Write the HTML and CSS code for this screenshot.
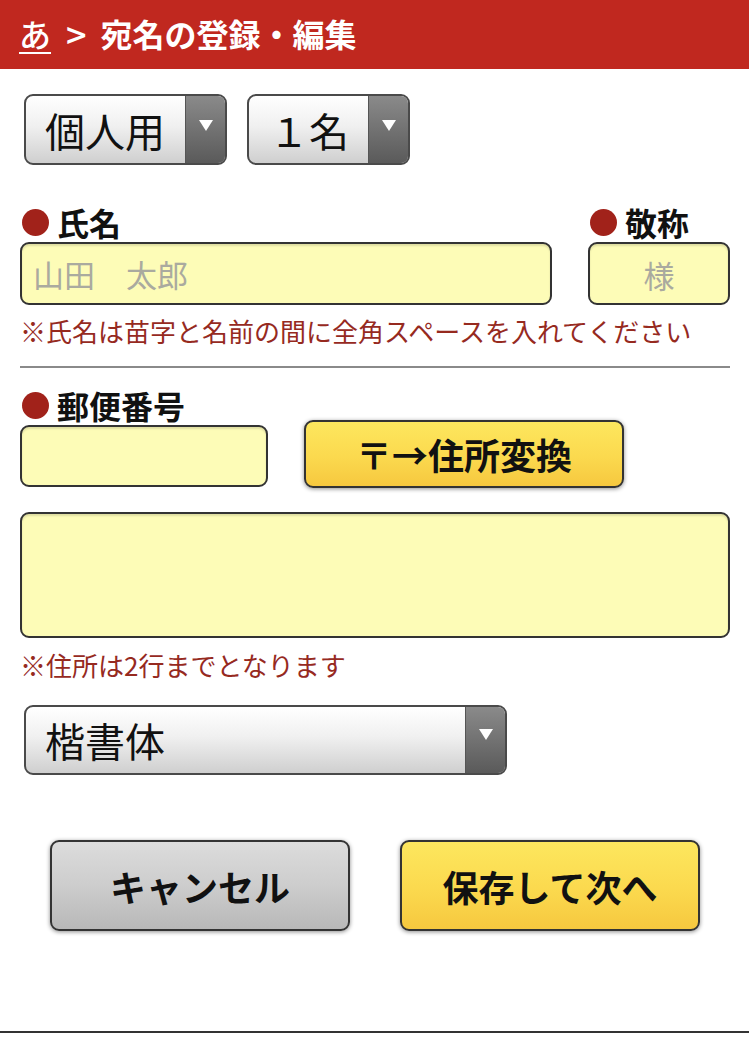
FILE: index.html
```html
<!DOCTYPE html>
<html lang="ja">
<head>
<meta charset="utf-8">
<title>宛名の登録・編集</title>
<link rel="stylesheet" href="styles.css">
</head>
<body>
<header class="topbar">
  <span class="crumb-link">あ</span><span class="crumb-sep">&gt;</span><span class="crumb-title">宛名の登録・編集</span>
</header>
<main class="content">
  <div class="select-row">
    <div class="select select-type"><span class="select-text">個人用</span><span class="select-arrow"></span></div>
    <div class="select select-count"><span class="select-text">１名</span><span class="select-arrow"></span></div>
  </div>

  <div class="name-grid">
    <div class="field">
      <div class="label"><span class="dot"></span>氏名</div>
      <div class="input input-name placeholder">山田　太郎</div>
    </div>
    <div class="field">
      <div class="label label-honor"><span class="dot"></span>敬称</div>
      <div class="input input-honor placeholder">様</div>
    </div>
  </div>
  <p class="note note-name">※氏名は苗字と名前の間に全角スペースを入れてください</p>
  <hr class="rule">

  <div class="label label-postal"><span class="dot"></span>郵便番号</div>
  <div class="postal-row">
    <div class="input input-postal"></div>
    <button class="btn btn-yellow btn-convert">〒→住所変換</button>
  </div>
  <div class="input input-address"></div>
  <p class="note note-address">※住所は2行までとなります</p>

  <div class="select select-font"><span class="select-text">楷書体</span><span class="select-arrow"></span></div>

  <div class="action-row">
    <button class="btn btn-gray btn-action">キャンセル</button>
    <button class="btn btn-yellow btn-action">保存して次へ</button>
  </div>
</main>
<div class="footer-line"></div>
</body>
</html>
```

FILE: styles.css
```css
* { box-sizing: border-box; }
html, body { margin: 0; padding: 0; background: #fff; }
body {
  font-family: "Noto Sans CJK JP", "Noto Sans", sans-serif;
  color: #111;
  width: 749px;
}

.topbar {
  height: 69px;
  background: #c0281f;
  color: #fff;
  display: flex;
  align-items: center;
  padding-left: 19px;
  padding-bottom: 4px;
  font-size: 32px;
  font-weight: 700;
  letter-spacing: 0;
}
.crumb-link {
  font-weight: 500;
  text-decoration: underline;
  text-decoration-thickness: 2px;
  text-underline-offset: 5px;
}
.crumb-sep { margin: 0 14px 0 15px; font-weight: 500; font-size: 36px; }

.content { padding: 0 19px 0 20px; }

/* selects */
.select-row { display: flex; gap: 20px; margin-top: 25px; padding-left: 4px; }
.select {
  height: 71px;
  border: 2px solid #4a4a4a;
  border-radius: 9px;
  background: linear-gradient(#ffffff 0%, #f0f0f0 45%, #cfcfcf 100%);
  display: flex;
  align-items: center;
  position: relative;
  overflow: hidden;
}
.select-text {
  flex: 1;
  font-size: 40px;
  font-weight: 400;
  color: #111;
  line-height: 1;
  padding-left: 19px;
}
.select-arrow {
  width: 40px;
  align-self: stretch;
  background: linear-gradient(#8a8a8a, #5a5a5a);
  border-left: 1px solid #555;
  position: relative;
}
.select-arrow::after {
  content: "";
  position: absolute;
  left: 50%;
  top: 24px;
  margin-left: -7px;
  border-left: 7px solid transparent;
  border-right: 7px solid transparent;
  border-top: 11px solid #fff;
}
.select-type { width: 203px; }
.select-count { width: 163px; }
.select-count .select-text { padding-left: 20px; }
.select-font { width: 483px; height: 70px; margin-left: 4px; margin-top: 25px; }
.select-font .select-arrow::after { top: 22px; }

/* labels */
.label {
  display: flex;
  align-items: center;
  font-size: 32px;
  font-weight: 700;
  height: 36px;
  line-height: 36px;
  color: #111;
}
.dot {
  width: 27px;
  height: 27px;
  border-radius: 50%;
  background: #a1221a;
  margin: 0 8px 0 2px;
  flex: none;
}

/* name row */
.name-grid {
  display: grid;
  grid-template-columns: 532px 142px;
  column-gap: 36px;
  margin-top: 39px;
}
.field .input { margin-top: 2px; }

.input {
  border: 2px solid #333;
  border-radius: 9px;
  background: #fdfcb7;
  box-shadow: inset 0 2px 2px rgba(0,0,0,0.12);
}
.placeholder {
  color: #aaaa9f;
  font-size: 31px;
  line-height: 1;
  display: flex;
  align-items: center;
}
.input-name { height: 63px; padding-left: 11px; }
.input-honor { height: 63px; justify-content: center; padding-left: 0; padding-top: 2px; }

.note {
  margin: 0;
  font-size: 26px;
  line-height: 30px;
  color: #962a1f;
}
.note-name { margin-top: 11px; }
.rule {
  margin: 20px 0 0;
  border: 0;
  height: 2px;
  background: #8a8a8a;
}

.label-postal { margin-top: 22px; height: 30px; line-height: 30px; }
.postal-row {
  display: flex;
  align-items: flex-end;
  gap: 36px;
  margin-top: 0;
}
.input-postal { width: 248px; height: 62px; margin-bottom: 1px; }

.btn {
  font-family: "Noto Sans CJK JP", "Noto Sans", sans-serif;
  font-weight: 700;
  color: #111;
  border: 2px solid #333;
  border-radius: 9px;
  box-shadow: 0 1px 4px rgba(0,0,0,0.45);
  padding: 0;
  line-height: 1;
}
.btn-yellow { background: linear-gradient(#fde75e 0%, #fbd94e 55%, #f6c83f 100%); }
.btn-gray { background: linear-gradient(#dcdcdc 0%, #cdcdcd 50%, #b8b8b8 100%); }
.btn-convert { width: 320px; height: 68px; font-size: 36px; }

.input-address { height: 126px; margin-top: 24px; }
.note-address { margin-top: 12px; }

.action-row {
  display: flex;
  gap: 50px;
  margin-top: 65px;
  padding-left: 30px;
}
.btn-action { width: 300px; height: 91px; font-size: 36px; }

.footer-line {
  margin-top: 100px;
  height: 2px;
  background: #333;
}
```
